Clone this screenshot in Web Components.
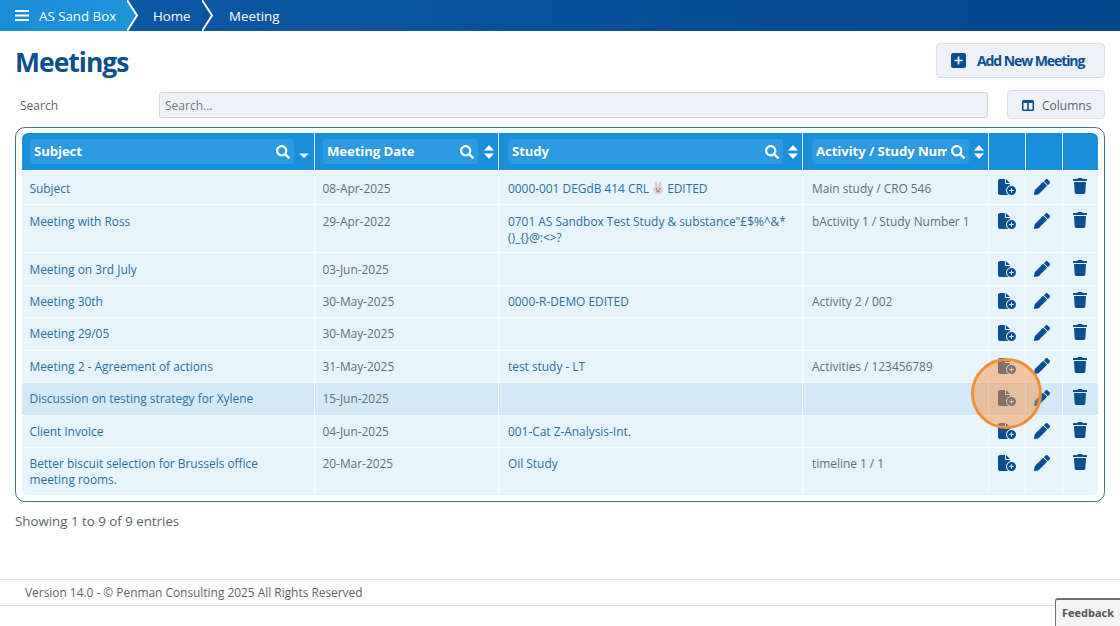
<!DOCTYPE html>
<html lang="en">
<head>
<meta charset="utf-8">
<title>Meetings</title>
<style>
html, body { margin: 0; padding: 0; background: #fff; }
body { font-family: "Open Sans", sans-serif; width: 1120px; height: 626px; overflow: hidden; }
</style>
</head>
<body>
<app-page>
    <crumb-bar>
        <crumb-item first menu>AS Sand Box</crumb-item>
        <crumb-item>Home</crumb-item>
        <crumb-item last>Meeting</crumb-item>
    </crumb-bar>
    <page-head title="Meetings"></page-head>
    <search-row></search-row>
    <meeting-table>
        <meeting-row subject="Subject" date="08-Apr-2025" activity="Main study / CRO 546" h="33" low="2"><span>0000-001 DEGdB 414 CRL <study-bunny></study-bunny> EDITED</span></meeting-row>
        <meeting-row subject="Meeting with Ross" date="29-Apr-2022" activity="bActivity 1 / Study Number 1" h="47" low="1"><span>0701 AS Sandbox Test Study &amp; substance"£$%^&amp;*()_{}@:&lt;&gt;?</span></meeting-row>
        <meeting-row subject="Meeting on 3rd July" date="03-Jun-2025" h="32" low="1"></meeting-row>
        <meeting-row subject="Meeting 30th" date="30-May-2025" activity="Activity 2 / 002" h="31"><span>0000-R-DEMO EDITED</span></meeting-row>
        <meeting-row subject="Meeting 29/05" date="30-May-2025" h="32"></meeting-row>
        <meeting-row subject="Meeting 2 - Agreement of actions" date="31-May-2025" activity="Activities / 123456789" h="31"><span>test study - LT</span></meeting-row>
        <meeting-row subject="Discussion on testing strategy for Xylene" date="15-Jun-2025" h="32" active></meeting-row>
        <meeting-row subject="Client Invoice" date="04-Jun-2025" h="31"><span>001-Cat Z-Analysis-Int.</span></meeting-row>
        <meeting-row subject="Better biscuit selection for Brussels office meeting rooms." date="20-Mar-2025" activity="timeline 1 / 1" h="47"><span>Oil Study</span></meeting-row>
    </meeting-table>
    <entries-note>Showing 1 to 9 of 9 entries</entries-note>
    <page-footer>Version 14.0 - © Penman Consulting 2025 All Rights Reserved</page-footer>
</app-page>
<click-ring></click-ring>
<feedback-tab>Feedback</feedback-tab>

<script>
const ICONS = {
    search: '<svg viewBox="0 0 512 512"><path d="M505 442.7L405.3 343c-4.5-4.5-10.6-7-17-7H372c27.6-35.3 44-79.7 44-128C416 93.1 322.9 0 208 0S0 93.1 0 208s93.1 208 208 208c48.3 0 92.7-16.4 128-44v16.3c0 6.4 2.5 12.5 7 17l99.7 99.7c9.4 9.4 24.6 9.4 33.9 0l28.3-28.3c9.4-9.4 9.4-24.6.1-34zM208 336c-70.7 0-128-57.2-128-128 0-70.7 57.2-128 128-128 70.7 0 128 57.2 128 128 0 70.7-57.2 128-128 128z"/></svg>',
    file: '<svg viewBox="0 0 576 512"><path d="M0 64C0 28.7 28.7 0 64 0H224V128c0 17.7 14.3 32 32 32H384v38.6C310.1 219.5 256 287.4 256 368c0 59.1 29.1 111.3 73.8 143.3c-3.2 .5-6.4 .7-9.8 .7H64c-35.3 0-64-28.7-64-64V64zm384 64H256V0L384 128zM288 368a144 144 0 1 1 288 0 144 144 0 1 1 -288 0zm144-80c-8.8 0-16 7.2-16 16v48H368c-8.8 0-16 7.2-16 16s7.2 16 16 16h48v48c0 8.8 7.2 16 16 16s16-7.2 16-16V384h48c8.8 0 16-7.2 16-16s-7.2-16-16-16H448V304c0-8.8-7.2-16-16-16z"/></svg>',
    pen: '<svg viewBox="0 0 512 512"><path d="M497.9 142.1l-46.1 46.1c-4.7 4.7-12.3 4.7-17 0l-111-111c-4.7-4.7-4.7-12.3 0-17l46.1-46.1c18.7-18.7 49.1-18.7 67.9 0l60.1 60.1c18.8 18.7 18.8 49.1 0 67.9zM284.2 99.8L21.6 362.4.4 483.9c-2.9 16.4 11.4 30.6 27.8 27.8l121.5-21.3 262.6-262.6c4.7-4.7 4.7-12.3 0-17l-111-111c-4.8-4.7-12.4-4.7-17.1 0z"/></svg>',
    trash: '<svg viewBox="0 0 448 512"><path d="M432 32H312l-9.4-18.7A24 24 0 0 0 281.1 0H166.8a23.72 23.72 0 0 0-21.4 13.3L136 32H16A16 16 0 0 0 0 48v32a16 16 0 0 0 16 16h416a16 16 0 0 0 16-16V48a16 16 0 0 0-16-16zM53.2 467a48 48 0 0 0 47.9 45h245.8a48 48 0 0 0 47.9-45L416 128H32z"/></svg>'
};

class AppPage extends HTMLElement {
    constructor() {
        super();
        this.attachShadow({ mode: 'open' }).innerHTML = `
            <style>
            :host { display: flex; flex-direction: column; height: 626px; font-family: "Open Sans", sans-serif; }
            </style>
            <slot></slot>`;
    }
}

class CrumbBar extends HTMLElement {
    constructor() {
        super();
        this.attachShadow({ mode: 'open' }).innerHTML = `
            <style>
            :host { display: flex; height: 31px; flex: none; background: linear-gradient(90deg, #0d5aa5, #03478d); overflow: hidden; }
            </style>
            <slot></slot>`;
    }
}

class CrumbItem extends HTMLElement {
    constructor() {
        super();
        const first = this.hasAttribute('first');
        const menu = this.hasAttribute('menu');
        const last = this.hasAttribute('last');
        const fill = first ? '#1f93da' : '#0a4f98';
        const width = first ? 127 : (last ? 100 : 75);
        this.attachShadow({ mode: 'open' }).innerHTML = `
            <style>
            :host { display: flex; align-items: center; position: relative; height: 31px; color: #fff; font-size: 13.300px; white-space: nowrap; flex: none;
                padding-left: ${first ? '15px' : (last ? '27px' : '26px')}; box-sizing: border-box; width: ${width}px;
                ${first ? 'background: linear-gradient(90deg, #1a8dd6, #1f93da);' : ''} }
            .menu { width: 14px; height: 13px; margin-right: 10px; flex: none; }
            .tip { position: absolute; top: 0; left: 100%; width: 12px; height: 31px; z-index: 1; }
            </style>
            ${menu ? '<svg class="menu" viewBox="0 0 14 13"><path d="M0 1h14v2H0zM0 5.500h14v2H0zM0 10h14v2H0z" fill="#fff"/></svg>' : ''}
            <slot></slot>
            ${last ? '' : `<svg class="tip" viewBox="0 0 12 31"><path d="M0 0 L10 15.500 L0 31 Z" fill="${fill}"/><path d="M0 0 L10 15.500 L0 31" fill="none" stroke="#fff" stroke-width="2"/></svg>`}`;
    }
}

class PageHead extends HTMLElement {
    constructor() {
        super();
        this.attachShadow({ mode: 'open' }).innerHTML = `
            <style>
            :host { display: flex; justify-content: space-between; align-items: flex-start; flex: none; height: 59px; padding: 12px 15px 0; box-sizing: border-box; }
            h1 { margin: 0; font-size: 26.500px; line-height: 38px; font-weight: 700; color: #0b4f8f; letter-spacing: -1px; }
            button { font: inherit; width: 169px; height: 35px; box-sizing: border-box; display: flex; align-items: center; gap: 11px; padding: 0 14px; background: #eef2f7; border: 1px solid #d6dfe8; border-radius: 4px; color: #0b4f8f; font-weight: 700; font-size: 14px; letter-spacing: -1.08px; white-space: nowrap; }
            svg { width: 15px; height: 15px; flex: none; }
            </style>
            <h1>${this.getAttribute('title')}</h1>
            <button>
                <svg viewBox="0 0 15 15"><rect width="15" height="15" rx="2" fill="#0b4f8f"/><path d="M6.700 3.500h1.600v3.200h3.200v1.600H8.300v3.200H6.700V8.300H3.500V6.700h3.200z" fill="#fff"/></svg>
                Add New Meeting
            </button>`;
    }
}

class SearchRow extends HTMLElement {
    constructor() {
        super();
        this.attachShadow({ mode: 'open' }).innerHTML = `
            <style>
            :host { display: flex; align-items: center; flex: none; height: 29px; padding: 0 15px 0 20px; font-size: 12px; color: #5a6570; }
            label { width: 139px; flex: none; padding-top: 2px; }
            .field { width: 829px; height: 26px; box-sizing: border-box; border: 1px solid #d3dbe3; border-radius: 2px; background: #eef2f7; padding: 0 5px; line-height: 26px; color: #6c7782; flex: none; }
            button { font: inherit; margin-left: 19px; width: 98px; height: 29px; box-sizing: border-box; display: flex; align-items: center; gap: 8px; padding: 2px 14px 0; background: #eef2f7; border: 1px solid #d6dfe8; border-radius: 4px; color: #4f6478; flex: none; }
            svg { width: 12px; height: 11px; flex: none; }
            </style>
            <label>Search</label>
            <div class="field">Search...</div>
            <button>
                <svg viewBox="0 0 12 11"><path fill="#0b4f8f" fill-rule="evenodd" d="M1.500 0h9A1.500 1.500 0 0 1 12 1.500v8a1.500 1.500 0 0 1-1.500 1.500h-9A1.500 1.500 0 0 1 0 9.500v-8A1.500 1.500 0 0 1 1.500 0zM1.500 3v6.500h3.700V3zm5.300 0v6.500h3.700V3z"/></svg>
                Columns
            </button>`;
    }
}

class MeetingTable extends HTMLElement {
    constructor() {
        super();
        const heads = [
            ['Subject', 'down'],
            ['Meeting Date', 'both'],
            ['Study', 'both'],
            ['Activity / Study Number', 'both']
        ];
        this.attachShadow({ mode: 'open' }).innerHTML = `
            <style>
            :host { display: block; flex: none; margin: 8px 15px 0; height: 375px; box-sizing: border-box; padding: 5px 6px; border: 1px solid #47708f; border-radius: 10px; --cols: 293px 184px 304px 186px 37px 37px 35px; }
            .inner { border-radius: 6px; overflow: hidden; background: #e8f4fc; height: 362px; }
            .head { display: grid; grid-template-columns: var(--cols); height: 37px; background: #1a8fd9; }
            .cell { display: flex; align-items: center; box-sizing: border-box; border-right: 1px solid #d9ecf8; padding: 0 0 0 8px; min-width: 0; }
            .cell:last-child { border-right: 0; }
            .cell:nth-child(3), .cell:nth-child(4) { padding-left: 9px; }
            .cell:nth-child(n+2) .sort { margin-right: -1px; }
            .cell:nth-child(2) .pill { margin-right: 1px; }
            .pill { flex: 1; min-width: 0; height: 25px; display: flex; align-items: center; background: #2b9ae0; border-radius: 4px; padding: 0 4px; gap: 4px; }
            .pill b { flex: 1; min-width: 0; overflow: hidden; white-space: nowrap; color: #fff; font-size: 13.200px; line-height: 18px; padding-bottom: 2px; font-weight: 700; letter-spacing: -0.1px; }
            .pill svg { width: 14px; height: 14px; fill: #fff; flex: none; }
            .sort { width: 20px; flex: none; display: flex; justify-content: center; }
            .sort svg { width: 10px; height: 14px; fill: #fff; display: block; }
            </style>
            <div class="inner">
                <div class="head">
                    ${heads.map(([name, dir]) => `
                        <div class="cell">
                            <div class="pill"><b>${name}</b>${ICONS.search}</div>
                            <div class="sort"><svg viewBox="0 0 10 14">${dir === 'down'
                                ? '<path d="M0 8.500h10L5 13z"/>'
                                : '<path d="M5 0l5 5.500H0zM5 14L0 8.500h10z"/>'}</svg></div>
                        </div>`).join('')}
                    <div class="cell"></div><div class="cell"></div><div class="cell"></div>
                </div>
                <slot></slot>
            </div>`;
    }
}

class MeetingRow extends HTMLElement {
    constructor() {
        super();
        const attr = name => this.getAttribute(name) || '';
        const low = Number(attr('low'));
        const iconLow = Math.min(low, 1);
        this.attachShadow({ mode: 'open' }).innerHTML = `
            <style>
            :host { display: grid; grid-template-columns: var(--cols); box-sizing: border-box; border-top: 1px solid #f6fbfe; font-size: 11.900px; line-height: 16px; height: ${Number(attr('h')) + 1}px; background: ${this.hasAttribute('active') ? '#d3e9f6' : '#e8f4fc'}; }
            .td { box-sizing: border-box; border-right: 1px solid #f6fbfe; padding: ${7 + low}px 8px 0; min-width: 0; }
            .td:last-child { border-right: 0; }
            .link { color: #26709f; }
            .sub { padding-left: 7.500px; }
            .date { padding-left: 7.500px; }
            .study, .act { padding-left: 9px; }
            .gray { color: #5f6e7a; }
            .icon { display: flex; justify-content: center; padding: ${7 + iconLow}px 0 0; }
            .icon svg { height: 16px; fill: #0b4f8f; display: block; }
            .pen { padding-right: 4px; }
            .bin { padding-right: 2px; padding-top: ${6 + iconLow}px; }
            </style>
            <div class="td link sub">${attr('subject')}</div>
            <div class="td gray date">${attr('date')}</div>
            <div class="td link study"><slot></slot></div>
            <div class="td gray act">${attr('activity')}</div>
            <div class="td icon">${ICONS.file}</div>
            <div class="td icon pen">${ICONS.pen}</div>
            <div class="td icon bin">${ICONS.trash}</div>`;
    }
}

class StudyBunny extends HTMLElement {
    constructor() {
        super();
        this.attachShadow({ mode: 'open' }).innerHTML = `
            <style>
            :host { display: inline-block; width: 12px; height: 14px; vertical-align: -2px; }
            svg { display: block; }
            </style>
            <svg viewBox="0 0 13 14" width="12" height="14">
                <ellipse cx="4.500" cy="3" rx="1.300" ry="3" fill="#d9c5c7"/>
                <ellipse cx="8.500" cy="3" rx="1.300" ry="3" fill="#d9c5c7"/>
                <ellipse cx="6.500" cy="9" rx="5.500" ry="4.800" fill="#e2d0d2"/>
                <circle cx="4.700" cy="8" r=".7" fill="#5b4a4a"/>
                <circle cx="8.300" cy="8" r=".7" fill="#5b4a4a"/>
                <ellipse cx="6.500" cy="10.500" rx="1.800" ry="1.500" fill="#b58d8d"/>
            </svg>`;
    }
}

class EntriesNote extends HTMLElement {
    constructor() {
        super();
        this.attachShadow({ mode: 'open' }).innerHTML = `
            <style>
            :host { display: block; flex: none; margin: 9px 15px 0; font-size: 13.300px; line-height: 20px; color: #5a6570; }
            </style>
            <slot></slot>`;
    }
}

class PageFooter extends HTMLElement {
    constructor() {
        super();
        this.attachShadow({ mode: 'open' }).innerHTML = `
            <style>
            :host { display: block; flex: none; margin-top: 48px; height: 27px; box-sizing: border-box; padding-left: 25px; border-top: 1px solid #dcdcdc; border-bottom: 1px solid #dcdcdc; font-size: 11.900px; line-height: 25px; color: #5a6570; }
            </style>
            <slot></slot>`;
    }
}

class ClickRing extends HTMLElement {
    constructor() {
        super();
        this.attachShadow({ mode: 'open' }).innerHTML = `
            <style>
            :host { position: fixed; left: 971px; top: 358px; width: 71px; height: 71px; box-sizing: border-box; border: 3px solid #f0903a; border-radius: 50%; background: rgba(245, 150, 70, .5); }
            </style>`;
    }
}

class FeedbackTab extends HTMLElement {
    constructor() {
        super();
        this.attachShadow({ mode: 'open' }).innerHTML = `
            <style>
            :host { position: fixed; left: 1055px; top: 598px; width: 65px; height: 28px; box-sizing: border-box; border: 1px solid #6f6f6f; border-bottom: 0; border-right: 0; border-top-width: 2px; border-radius: 3px 0 0 0; background: #f4f4f4; font-size: 11px; font-weight: 700; color: #555; line-height: 26px; padding-left: 6px; }
            </style>
            <slot></slot>`;
    }
}

window.customElements.define('app-page', AppPage);
window.customElements.define('crumb-bar', CrumbBar);
window.customElements.define('crumb-item', CrumbItem);
window.customElements.define('page-head', PageHead);
window.customElements.define('search-row', SearchRow);
window.customElements.define('meeting-table', MeetingTable);
window.customElements.define('meeting-row', MeetingRow);
window.customElements.define('study-bunny', StudyBunny);
window.customElements.define('entries-note', EntriesNote);
window.customElements.define('page-footer', PageFooter);
window.customElements.define('click-ring', ClickRing);
window.customElements.define('feedback-tab', FeedbackTab);
</script>
</body>
</html>
